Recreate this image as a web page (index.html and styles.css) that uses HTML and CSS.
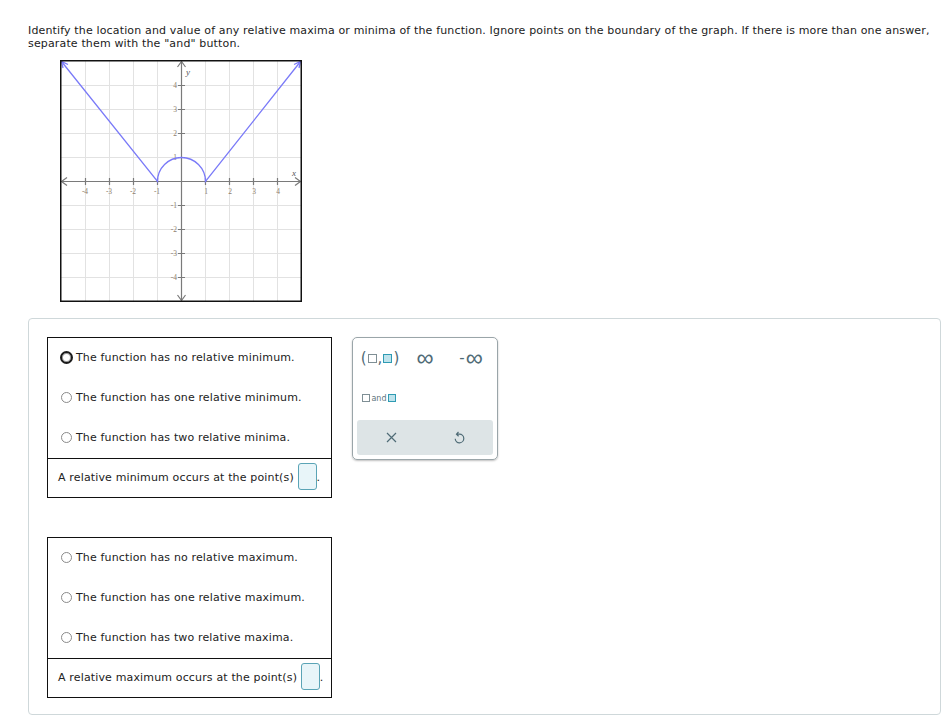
FILE: index.html
```html
<!DOCTYPE html>
<html>
<head>
<meta charset="utf-8">
	<title>relative extrema</title>
	<link rel="stylesheet" href="styles.css">
</head>
<body>
<p class="question">Identify the location and value of any relative maxima or minima of the function. Ignore points on the boundary of the graph. If there is more than one answer,<br>separate them with the "and" button.</p>

<div class="graph">
	<svg width="242" height="242" viewBox="0 0 242 242">
		<!-- grid -->
		<g stroke="#e2e2e2" stroke-width="1">
			<path d="M25.5 1V241M49.5 1V241M73.5 1V241M97.5 1V241M145.5 1V241M169.5 1V241M193.5 1V241M217.5 1V241"/>
			<path d="M1 25.5H241M1 49.5H241M1 73.5H241M1 97.5H241M1 145.5H241M1 169.5H241M1 193.5H241M1 217.5H241"/>
		</g>
		<!-- axes -->
		<g stroke="#7a7a7a" stroke-width="1.2" fill="none">
			<path d="M1 121.5H241M121.5 1V241"/>
			<path d="M7 117.5L1.5 121.5L7 125.5M235 117.5L240.5 121.5L235 125.5"/>
			<path d="M117.5 7L121.5 1.5L125.5 7M117.5 235L121.5 240.5L125.5 235"/>
			<path d="M25.5 118V125M49.5 118V125M73.5 118V125M97.5 118V125M145.5 118V125M169.5 118V125M193.5 118V125M217.5 118V125"/>
			<path d="M118 25.5H125M118 49.5H125M118 73.5H125M118 97.5H125M118 145.5H125M118 169.5H125M118 193.5H125M118 217.5H125"/>
		</g>
		<g class="ticks" text-anchor="middle">
			<text x="25" y="134">-4</text>
			<text x="49" y="134">-3</text>
			<text x="73" y="134">-2</text>
			<text x="97" y="134">-1</text>
			<text x="146" y="134">1</text>
			<text x="170" y="134">2</text>
			<text x="194" y="134">3</text>
			<text x="218" y="134">4</text>
		</g>
		<g class="ticks" text-anchor="end">
			<text x="117" y="28">4</text>
			<text x="117" y="52">3</text>
			<text x="117" y="76">2</text>
			<text x="117" y="100">1</text>
			<text x="117" y="148">-1</text>
			<text x="117" y="172">-2</text>
			<text x="117" y="196">-3</text>
			<text x="117" y="220">-4</text>
		</g>
		<text class="axis-name" x="126" y="15">y</text>
		<text class="axis-name" x="232" y="116">x</text>
		<!-- function -->
		<g stroke="#7a7af8" stroke-width="1.3" fill="none">
			<path d="M1.5 1.5L97.5 121.5A24 24 0 0 1 145.5 121.5L240.5 1.5"/>
			<path d="M3 8L1.5 1.5L8 4.5M239 8L240.5 1.5L234 4.5"/>
		</g>
		<rect x="0.75" y="0.75" width="240.5" height="240.5" fill="none" stroke="#111" stroke-width="1.5"/>
	</svg>
</div>

<div class="panel">
	<div class="answers">
		<div class="box">
			<div class="choices">
				<label class="choice"><span class="radio focus"></span>The function has no relative minimum.</label>
				<label class="choice"><span class="radio"></span>The function has one relative minimum.</label>
				<label class="choice"><span class="radio"></span>The function has two relative minima.</label>
			</div>
			<div class="fill">A relative minimum occurs at the point(s) <span class="blank"></span>.</div>
		</div>
		<div class="box">
			<div class="choices">
				<label class="choice"><span class="radio"></span>The function has no relative maximum.</label>
				<label class="choice"><span class="radio"></span>The function has one relative maximum.</label>
				<label class="choice"><span class="radio"></span>The function has two relative maxima.</label>
			</div>
			<div class="fill">A relative maximum occurs at the point(s) <span class="blank"></span>.</div>
		</div>
	</div>

	<div class="tools">
		<div class="tool-row">
			<span class="tool interval">(<i class="sq"></i>,<i class="sq on"></i>)</span>
			<span class="tool inf">&infin;</span>
			<span class="tool inf"><b class="minus">-</b>&infin;</span>
		</div>
		<div class="tool-row">
			<span class="tool and"><i class="sq"></i>and<i class="sq on"></i></span>
		</div>
		<div class="tool-bar">
			<span class="bar-btn">
				<svg width="11" height="11" viewBox="0 0 11 11"><path d="M1 1L10 10M10 1L1 10" stroke="#4f6b76" stroke-width="1.2" fill="none"/></svg>
			</span>
			<span class="bar-btn">
				<svg width="12" height="14" viewBox="0 0 12 14"><path d="M5.5 1L3.5 3.2L5.6 5.2M3.6 3.2H6.5A4.3 4.3 0 1 1 2.2 7.8" stroke="#4f6b76" stroke-width="1.2" fill="none"/></svg>
			</span>
		</div>
	</div>
</div>
</body>
</html>
```

FILE: styles.css
```css
*{margin: 0;padding: 0;box-sizing: border-box;}
body{
	font-family: "DejaVu Sans", Verdana, sans-serif;
	font-size: 11px;
	letter-spacing: 0.15px;
	color: #222;
	padding: 0 0 3px 28px;
}
.question{
	padding-top: 24px;
	line-height: 13px;
	color: #1b1b1b;
}
.graph{
	margin: 10px 0 0 32px;
	height: 243px;
}
.ticks{
	font-family: "Liberation Serif", serif;
	font-size: 7.5px;
	letter-spacing: 0;
	fill: #8e7c6c;
}
.axis-name{
	font-family: "Liberation Serif", serif;
	font-style: italic;
	font-size: 9px;
	fill: #555;
}

.panel{
	width: 913px;
	margin-top: 15px;
	border: 1px solid #cfd8da;
	border-radius: 4px;
	padding: 18px 18px 16px;
	display: flex;
	gap: 20px;
	align-items: flex-start;
}
.answers{
	display: flex;
	flex-direction: column;
	gap: 39px;
}
.box{
	width: 285px;
	border: 1px solid #111;
}
.choices{
	border-bottom: 1px solid #111;
}
.choice{
	display: flex;
	align-items: center;
	height: 40px;
	padding: 0 0 1px 13px;
	line-height: 14px;
}
.radio{
	width: 11px;
	height: 11px;
	border: 1px solid #8a8a8a;
	border-radius: 50%;
	margin-right: 4px;
	background: #fff;
}
.radio.focus{
	width: 13px;
	height: 13px;
	border: 2.5px solid #1a1a1a;
	box-shadow: inset 0 0 0 1px #999;
	margin-left: -1px;
	margin-right: 3px;
}
.fill{
	height: 38px;
	line-height: 38px;
	padding-left: 10px;
}
.blank{
	display: inline-block;
	width: 19px;
	height: 27px;
	border: 1px solid #5aa4b6;
	border-radius: 3px;
	background: #e8f5f9;
	vertical-align: middle;
	margin: -3px 0 0 0;
}

/* toolbox */
.tools{
	width: 146px;
	border: 1px solid #9aa5a9;
	border-radius: 5px;
	box-shadow: 0 1px 2px rgba(0,0,0,0.25);
	padding: 0 4px 4px;
	letter-spacing: 0;
}
.tool-row{
	display: grid;
	grid-template-columns: 44px 48px 44px;
	height: 40px;
	align-items: center;
}
.tool{
	color: #4f6b76;
	text-align: center;
}
.interval{
	font-size: 15px;
	display: flex;
	align-items: center;
	justify-content: center;
	gap: 1px;
	padding-left: 2px;
}
.sq{
	display: inline-block;
	width: 9px;
	height: 9px;
	border: 1px solid #7f8f95;
	background: #fff;
}
.sq.on{
	border-color: #2e9bb3;
	background: #bfe3ec;
}
.inf{
	font-size: 24px;
	line-height: 24px;
	font-weight: 300;
}
.minus{
	font-size: 15px;
	font-weight: normal;
	vertical-align: 3px;
	margin-right: 1px;
}
.and{
	font-size: 8px;
	display: flex;
	align-items: center;
	justify-content: center;
	gap: 1px;
	color: #5d7580;
}
.and .sq{
	width: 8px;
	height: 8px;
}
.tool-bar{
	margin-top: 2px;
	height: 35px;
	background: #dde4e6;
	border-radius: 3px;
	display: flex;
}
.bar-btn{
	flex: 1;
	display: flex;
	align-items: center;
	justify-content: center;
}
```
